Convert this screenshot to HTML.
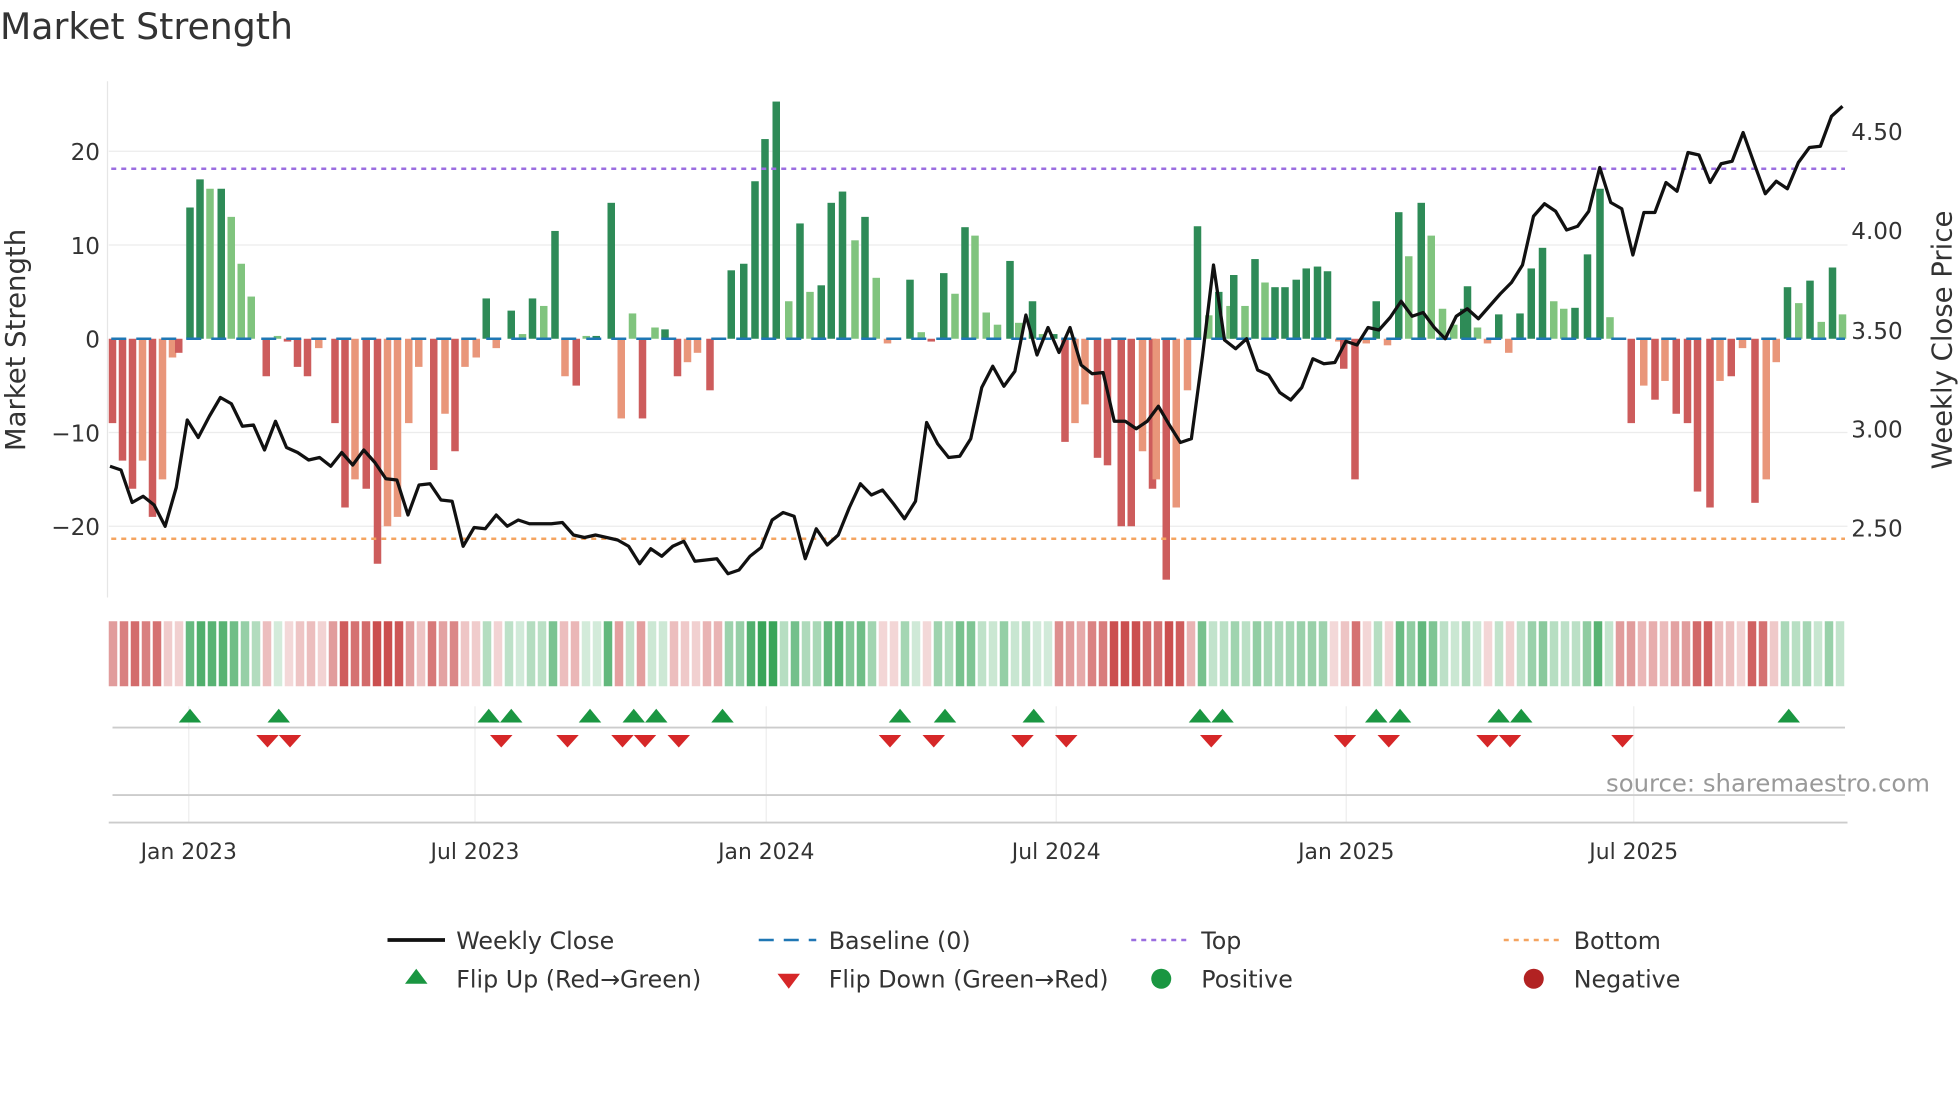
<!DOCTYPE html>
<html><head><meta charset="utf-8">
<style>
html,body{margin:0;padding:0;background:#fff;}
svg{display:block;font-family:"DejaVu Sans","Liberation Sans",sans-serif;}
</style></head>
<body>
<svg id="s" width="1960" height="1102" viewBox="0 0 1568 881.6" xmlns="http://www.w3.org/2000/svg">
<rect width="1568" height="882" fill="#fff"/>
<text x="0" y="31" font-size="29" fill="#333">Market Strength</text>
<g stroke="#ececec" stroke-width="1">
<line x1="87" x2="1478" y1="121" y2="121"/><line x1="87" x2="1478" y1="196" y2="196"/>
<line x1="87" x2="1478" y1="346" y2="346"/><line x1="87" x2="1478" y1="421" y2="421"/>
</g>
<line x1="86" x2="86" y1="65" y2="478" stroke="#e6e6e6"/>
<g font-size="18.5" fill="#333" text-anchor="end">
<text x="80" y="128">20</text><text x="80" y="203">10</text><text x="80" y="278">0</text>
<text x="80" y="353">−10</text><text x="80" y="428">−20</text>
</g>
<g font-size="18.5" fill="#333">
<text x="1481" y="112">4.50</text><text x="1481" y="191">4.00</text><text x="1481" y="271">3.50</text>
<text x="1481" y="350">3.00</text><text x="1481" y="429">2.50</text>
</g>
<text transform="translate(20,272) rotate(-90)" font-size="22" fill="#333" text-anchor="middle">Market Strength</text>
<text transform="translate(1561,272) rotate(-90)" font-size="22" fill="#333" text-anchor="middle">Weekly Close Price</text>
<g id="bars"></g>
<line x1="89" x2="1476" y1="271" y2="271" stroke="#1f77b4" stroke-width="2" stroke-dasharray="12,8"/>
<line x1="89" x2="1476" y1="135" y2="135" stroke="#9b6ee0" stroke-width="2" stroke-dasharray="4,4"/>
<line x1="89" x2="1476" y1="431" y2="431" stroke="#f4a460" stroke-width="2" stroke-dasharray="4,4"/>
<polyline id="price" fill="none" stroke="#111" stroke-width="2.6" stroke-linejoin="round"/>
<g id="heat"></g>
<g stroke="#eee"><line x1="151" x2="151" y1="565" y2="658"/><line x1="380" x2="380" y1="565" y2="658"/><line x1="613" x2="613" y1="565" y2="658"/><line x1="845" x2="845" y1="565" y2="658"/><line x1="1077" x2="1077" y1="565" y2="658"/><line x1="1307" x2="1307" y1="565" y2="658"/></g>
<line x1="90" x2="1476" y1="582" y2="582" stroke="#ccc" stroke-width="1.5"/>
<line x1="90" x2="1476" y1="636" y2="636" stroke="#ccc" stroke-width="1.5"/>
<line x1="87" x2="1478" y1="658" y2="658" stroke="#ccc" stroke-width="1.5"/>
<g id="mk"></g>
<text x="1544" y="633" font-size="19.5" fill="#999" text-anchor="end">source: sharemaestro.com</text>
<g font-size="17.5" fill="#333" text-anchor="middle">
<text x="151" y="687">Jan 2023</text><text x="380" y="687">Jul 2023</text><text x="613" y="687">Jan 2024</text>
<text x="845" y="687">Jul 2024</text><text x="1077" y="687">Jan 2025</text><text x="1307" y="687">Jul 2025</text>
</g>
<g font-size="19" fill="#333">
<line x1="310" x2="356" y1="752" y2="752" stroke="#111" stroke-width="3"/><text x="365" y="759">Weekly Close</text>
<line x1="607" x2="653" y1="752" y2="752" stroke="#1f77b4" stroke-width="2" stroke-dasharray="12,8"/><text x="663" y="759">Baseline (0)</text>
<line x1="905" x2="951" y1="752" y2="752" stroke="#9b6ee0" stroke-width="2" stroke-dasharray="4,4"/><text x="961" y="759">Top</text>
<line x1="1203" x2="1249" y1="752" y2="752" stroke="#f4a460" stroke-width="2" stroke-dasharray="4,4"/><text x="1259" y="759">Bottom</text>
<polygon points="324,787 342,787 333,775" fill="#1a9641"/><text x="365" y="790">Flip Up (Red→Green)</text>
<polygon points="622,779 640,779 631,791" fill="#d62728"/><text x="663" y="790">Flip Down (Green→Red)</text>
<circle cx="929" cy="783" r="8" fill="#1a9641"/><text x="961" y="790">Positive</text>
<circle cx="1227" cy="783" r="8" fill="#b22222"/><text x="1259" y="790">Negative</text>
</g>
</svg>
<script>
var NS="http://www.w3.org/2000/svg";
function el(p,t,a){var e=document.createElementNS(NS,t);for(var k in a)e.setAttribute(k,a[k]);p.appendChild(e);return e;}
var B=[[90,-9],[98,-13],[106,-16],[114,-13],[122,-19],[130,-15],[138,-2],[143,-1.5],[152,14],[160,17],[168,16],[177,16],[185,13],[193,8],[201,4.5],[213,-4],[222,0.3],[230,-0.3],[238,-3],[246,-4],[255,-1],[268,-9],[276,-18],[284,-15],[293,-16],[302,-24],[310,-20],[318,-19],[327,-9],[335,-3],[347,-14],[356,-8],[364,-12],[372,-3],[381,-2],[389,4.3],[397,-1],[409,3],[418,0.5],[426,4.3],[435,3.5],[444,11.5],[452,-4],[461,-5],[469,0.3],[477,0.3],[489,14.5],[497,-8.5],[506,2.7],[514,-8.5],[524,1.2],[532,1],[542,-4],[550,-2.5],[558,-1.5],[568,-5.5],[585,7.3],[595,8],[604,16.8],[612,21.3],[621,25.3],[631,4],[640,12.3],[648,5],[657,5.7],[665,14.5],[674,15.7],[684,10.5],[692,13],[701,6.5],[710,-0.5],[728,6.3],[737,0.7],[745,-0.3],[755,7],[764,4.8],[772,11.9],[780,11],[789,2.8],[798,1.5],[808,8.3],[815,1.7],[826,4],[834,0.5],[843,0.5],[852,-11],[860,-9],[868,-7],[878,-12.7],[886,-13.5],[897,-20],[905,-20],[914,-12],[922,-16],[925,-15],[933,-25.7],[941,-18],[950,-5.5],[958,12],[967,2.5],[975,5],[984,3.5],[987,6.8],[996,3.5],[1004,8.5],[1012,6],[1020,5.5],[1028,5.5],[1037,6.3],[1045,7.5],[1054,7.7],[1062,7.2],[1071,-0.3],[1075,-3.2],[1084,-15],[1093,-0.5],[1101,4],[1110,-0.7],[1119,13.5],[1127,8.8],[1137,14.5],[1145,11],[1154,3.2],[1163,1.5],[1171,3.2],[1174,5.6],[1182,1.2],[1190,-0.5],[1199,2.6],[1207,-1.5],[1216,2.7],[1225,7.5],[1234,9.7],[1243,4],[1251,3.2],[1260,3.3],[1270,9],[1280,16],[1288,2.3],[1305,-9],[1315,-5],[1324,-6.5],[1332,-4.5],[1341,-8],[1350,-9],[1358,-16.3],[1368,-18],[1376,-4.5],[1385,-4],[1394,-1],[1404,-17.5],[1413,-15],[1421,-2.5],[1430,5.5],[1439,3.8],[1448,6.2],[1457,1.8],[1466,7.6],[1474,2.6]];
var g=document.getElementById("bars"),prev=0;
B.forEach(function(b){var v=b[1],h=Math.abs(v)*7.5,dark=Math.abs(v)>=Math.abs(prev)-0.5;
var c=v>=0?(dark?"#2e8b57":"#80c47e"):(dark?"#cd5c5c":"#e9967a");
el(g,"rect",{x:b[0]-3,y:v>=0?271-h:271,width:6,height:Math.max(h,1),fill:c});prev=v;});
var hg=document.getElementById("heat");
function interp(x){var i=0;while(i<B.length-1&&B[i+1][0]<x)i++;var a=B[i],bb=B[Math.min(i+1,B.length-1)];return Math.abs(a[0]-x)<Math.abs(bb[0]-x)?a[1]:bb[1];}
for(var x=87;x<1472;x+=8.8){var v=interp(x+4),t=Math.min(Math.abs(v)/20,1)*0.75+0.2;
var c=v>=0?"rgba(46,160,80,"+t+")":"rgba(200,70,70,"+t+")";
el(hg,"rect",{x:x,y:497,width:6.8,height:52,fill:c});}
var P=[373,376,402,397,404,421,390,336,350,333,318,323,341,340,360,337,358,362,368,366,373,362,372,360,370,383,384,412,388,387,400,401,437,422,423,412,421,416,419,419,419,418,428,430,428,430,432,437,451,439,445,437,433,449,448,447,459,456,445,438,416,410,413,447,423,436,428,406,387,396,392,403,415,401,338,355,366,365,351,310,293,309,297,252,284,262,282,262,292,299,298,337,337,343,337,325,340,354,351,285,212,272,279,271,296,300,314,320,310,287,291,290,273,276,262,264,254,241,253,250,262,271,253,247,255,245,235,226,212,173,163,169,184,181,169,134,162,167,204,170,170,146,153,122,124,146,131,129,106,131,155,145,151,130,118,117,93,85];
var pts=P.map(function(y,i){return (88+i*(1386/(P.length-1))).toFixed(1)+","+y;}).join(" ");
document.getElementById("price").setAttribute("points",pts);
var mk=document.getElementById("mk");
[152,223,391,409,472,507,525,578,720,756,827,960,978,1101,1120,1199,1217,1431].forEach(function(x){el(mk,"polygon",{points:(x-9)+",578 "+(x+9)+",578 "+x+",567",fill:"#1a9641"});});
[214,232,401,454,498,516,543,712,747,818,853,969,1076,1111,1190,1208,1298].forEach(function(x){el(mk,"polygon",{points:(x-9)+",588 "+(x+9)+",588 "+x+",598",fill:"#d62728"});});
</script>
</body></html>
